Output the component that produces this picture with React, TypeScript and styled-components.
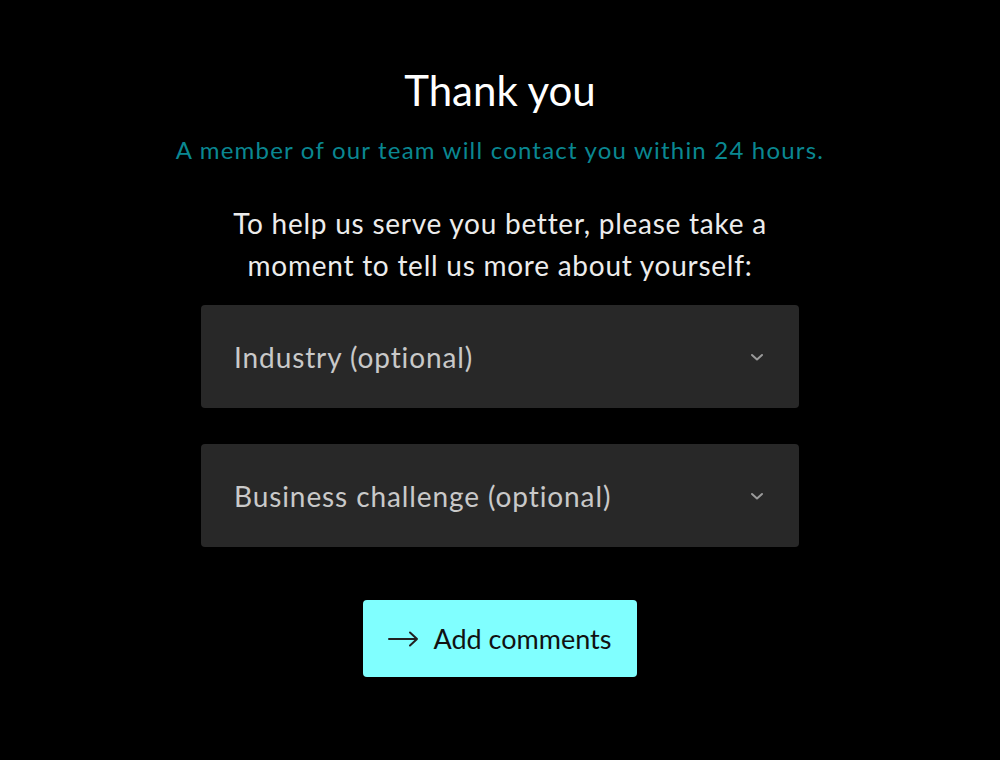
import React from "react";
import styled, { createGlobalStyle } from "styled-components";

const Global = createGlobalStyle`
  html, body { margin: 0; padding: 0; background: #000; }
  body { font-family: "Lato", "Open Sans", sans-serif; }
  #root { min-height: 760px; background: #000; }
`;

const Page = styled.main`
  display: flex;
  flex-direction: column;
  align-items: center;
  padding-top: 62px;
  color: #fff;
`;

const Title = styled.h1`
  margin: 0;
  font-weight: 400;
  font-size: 42px;
  line-height: 56px;
  color: #fff;
`;

const Subtitle = styled.p`
  margin: 17px 0 0;
  font-size: 24px;
  line-height: 30px;
  letter-spacing: 1.2px;
  color: #0a8791;
`;

const Lead = styled.p`
  margin: 37px 0 0;
  font-size: 28px;
  line-height: 42px;
  letter-spacing: 0.75px;
  text-align: center;
  color: #ececec;
  max-width: 600px;
`;

const Fields = styled.div`
  display: flex;
  flex-direction: column;
  gap: 36px;
  margin-top: 19px;
  width: 598px;
`;

const Select = styled.div`
  display: flex;
  align-items: center;
  justify-content: space-between;
  height: 103px;
  padding: 0 34px 0 33px;
  box-sizing: border-box;
  background: #282828;
  border-radius: 4px;
  font-size: 28px;
  letter-spacing: 0.9px;
  color: #c9c9c9;
`;

const Chevron = styled.svg`
  width: 16px;
  height: 12px;
  color: #9a9a9a;
`;

const Button = styled.button`
  display: flex;
  align-items: center;
  gap: 14px;
  margin-top: 53px;
  width: 274px;
  height: 77px;
  justify-content: center;
  border: none;
  border-radius: 4px;
  background: #80ffff;
  color: #111;
  font-family: inherit;
  font-size: 27px;
  cursor: pointer;
`;

const Arrow = () => (
  <svg width="31" height="16" viewBox="0 0 31 16" fill="none" stroke="#222" strokeWidth="2" strokeLinecap="round" strokeLinejoin="round">
    <path d="M1 8h28M22 1.5 29 8l-7 6.5" />
  </svg>
);

const Field = ({ label }: { label: string }) => (
  <Select>
    <span>{label}</span>
    <Chevron viewBox="0 0 16 12" fill="none" stroke="currentColor" strokeWidth="2" strokeLinecap="round" strokeLinejoin="round">
      <path d="M3 4l5 4.5L13 4" />
    </Chevron>
  </Select>
);

export default function App() {
  return (
    <>
      <Global />
      <Page>
        <Title>Thank you</Title>
        <Subtitle>A member of our team will contact you within 24 hours.</Subtitle>
        <Lead>To help us serve you better, please take a moment to tell us more about yourself:</Lead>
        <Fields>
          <Field label="Industry (optional)" />
          <Field label="Business challenge (optional)" />
        </Fields>
        <Button>
          <Arrow />
          Add comments
        </Button>
      </Page>
    </>
  );
}
